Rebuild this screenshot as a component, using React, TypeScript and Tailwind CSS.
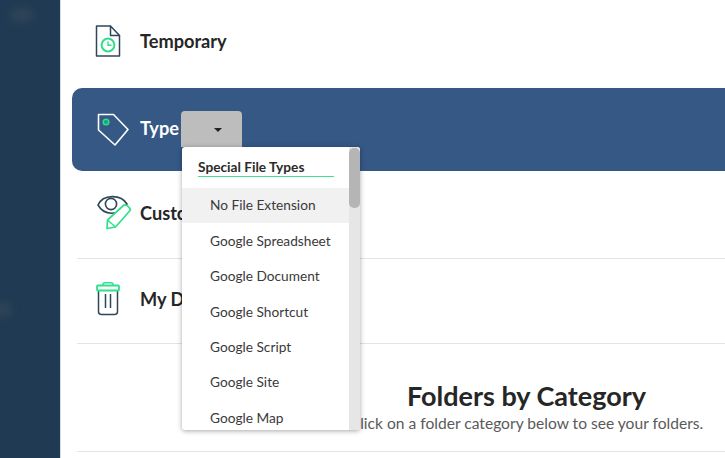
const items = ["No File Extension","Google Spreadsheet","Google Document","Google Shortcut","Google Script","Google Site","Google Map"];

function FileClock() {
  return (
    <svg width="26" height="32" viewBox="0 0 26 32" fill="none">
      <path d="M15.5 1H1.5V31H24.5V10.5" stroke="#2f4858" strokeWidth="1.5" strokeLinejoin="round" />
      <path d="M15.5 1V10.5H24.5Z" stroke="#2f4858" strokeWidth="1.5" strokeLinejoin="round" />
      <circle cx="13" cy="20" r="6.4" stroke="#2fe08a" strokeWidth="2" />
      <path d="M13 16.5V20.3H16.5" stroke="#2fe08a" strokeWidth="1.4" />
    </svg>
  );
}
function Tag() {
  return (
    <svg width="34" height="34" viewBox="0 0 34 34" fill="none">
      <path d="M2.5 1.5H17.5L32 16.5L19 32L2.5 17Z" stroke="#fff" strokeWidth="1.6" strokeLinejoin="round" />
      <circle cx="10" cy="9" r="2.8" fill="#1f9e84" stroke="#2fe08a" strokeWidth="1.5" />
    </svg>
  );
}
function EyePencil() {
  return (
    <svg width="36" height="36" viewBox="0 0 36 36" fill="none">
      <path d="M1 10C6 -1 24 -1 30 9C26 14 24 16 20 17.5C12 19.5 5 17 1 10Z" stroke="#2f4858" strokeWidth="1.6" />
      <circle cx="14" cy="9" r="5.6" stroke="#2f4858" strokeWidth="1.6" />
      <path d="M10 33.5L10.5 25L27 10C29 9 33 12.5 33.5 15L18.5 32Z" fill="#fff" stroke="#2fe08a" strokeWidth="1.7" strokeLinejoin="round" />
      <path d="M10.5 25L18.5 32" stroke="#2fe08a" strokeWidth="1.4" />
    </svg>
  );
}
function Trash() {
  return (
    <svg width="24" height="34" viewBox="0 0 24 34" fill="none">
      <path d="M2.5 9V29.5C2.5 31.5 4 32.5 5.5 32.5H18.5C20 32.5 21.5 31.5 21.5 29.5V9" stroke="#2f4858" strokeWidth="1.5" />
      <path d="M9.5 12V26M14.5 12V26" stroke="#2f4858" strokeWidth="1.5" />
      <rect x="1" y="3.5" width="22" height="5" rx="0.8" stroke="#2fe08a" strokeWidth="1.8" />
      <path d="M7 3.5V2C7 1.2 8 0.8 9 0.8H15C16 0.8 17 1.2 17 2V3.5" stroke="#2fe08a" strokeWidth="1.5" />
    </svg>
  );
}

export default function App() {
  return (
    <div className="relative flex h-[458px] w-[725px] overflow-hidden bg-white font-['Lato','Open_Sans',sans-serif]">
      <aside className="relative h-full w-[61px] shrink-0 border-r border-[#d5dde6] bg-[#1f3a52]">
        <div className="absolute left-[10px] top-[8px] h-[14px] w-[24px] rounded-full bg-[#3b4c5c] opacity-60 blur-[4px]" />
        <div className="absolute left-[-8px] top-[303px] h-[14px] w-[20px] rounded-full bg-[#3b4c5c] opacity-60 blur-[4px]" />
      </aside>
      <main className="flex min-w-0 flex-1 flex-col pl-[11px]">
        <div className="flex h-[88px] shrink-0 items-center pb-[5px] pl-[23px]">
          <span className="mb-[2px] flex w-[45px] justify-start"><FileClock /></span>
          <span className="text-[18.2px] font-bold leading-none text-[#262626]">Temporary</span>
        </div>
        <div className="flex h-[83px] shrink-0 items-center rounded-l-[10px] bg-[#355885] pl-[24px]">
          <span className="flex w-[44px]"><Tag /></span>
          <span className="mb-[2px] text-[18.2px] font-bold leading-none text-white">Type</span>
          <span className="mb-[1px] ml-[2px] flex h-[36px] w-[61px] items-center justify-center rounded-t-[4px] bg-[#bdbdbd] pl-[12px]">
            <span className="mt-[2px] h-0 w-0 border-x-[4px] border-t-[4px] border-x-transparent border-t-[#222]" />
          </span>
        </div>
        <div className="ml-[5px] flex h-[88px] shrink-0 items-center border-b border-[#e3e3e3] pb-[3px] pl-[20px]">
          <span className="flex w-[43px]"><EyePencil /></span>
          <span className="text-[18.2px] font-bold leading-none text-[#262626]">Custom</span>
        </div>
        <div className="ml-[5px] flex h-[85px] shrink-0 items-center border-b border-[#e3e3e3] pb-[4px] pl-[19px]">
          <span className="flex w-[44px]"><Trash /></span>
          <span className="text-[18.2px] font-bold leading-none text-[#262626]">My Drive</span>
        </div>
        <div className="ml-[5px] flex h-[108px] shrink-0 flex-col items-center border-b border-[#e3e3e3] pt-[36px] pl-[251px]">
          <h2 className="whitespace-nowrap text-[27px] font-bold leading-[32px] text-[#262626]">Folders by Category</h2>
          <p className="mt-[1px] whitespace-nowrap text-[15.6px] leading-[20px] text-[#5a5a5a]">Click on a folder category below to see your folders.</p>
        </div>
      </main>
      <div className="absolute left-[182px] top-[147px] flex h-[283px] w-[178px] overflow-hidden rounded-[3px] bg-white shadow-[0_1px_5px_rgba(0,0,0,0.35)]">
        <div className="min-w-0 flex-1">
          <div className="ml-[16px] mt-[12px] whitespace-nowrap text-[13.7px] font-bold leading-[16px] text-[#2b2b2b]">Special File Types</div>
          <div className="ml-[16px] mt-[1px] h-px w-[136px] bg-[#3fe08f]" />
          <ul className="mt-[11px]">
            {items.map((t, i) => (
              <li key={t} className={`flex h-[35.4px] items-center whitespace-nowrap pl-[28px] text-[13.7px] text-[#3a3a3a] ${i === 0 ? "bg-[#f1f1f1]" : ""}`}>{t}</li>
            ))}
          </ul>
        </div>
        <div className="w-[11px] shrink-0 bg-[#e6e6e6] pt-[1px]">
          <div className="h-[60px] w-full rounded-[5px] bg-[#b5b5b5]" />
        </div>
      </div>
    </div>
  );
}
